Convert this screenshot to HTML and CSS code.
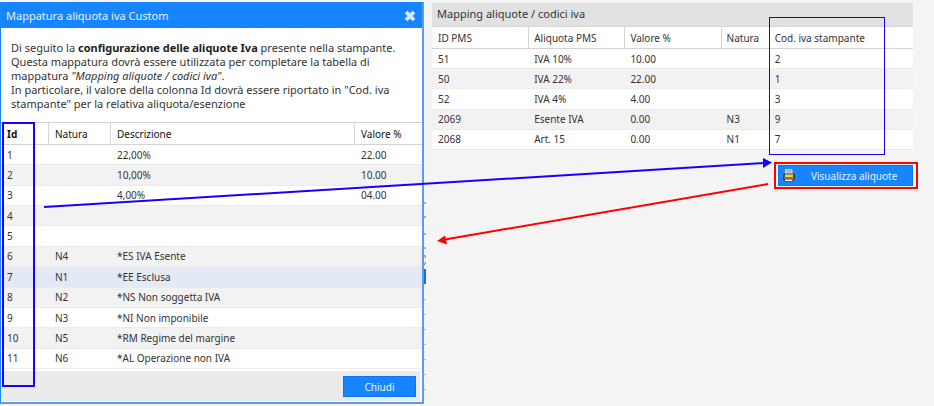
FILE: index.html
```html
<!DOCTYPE html>
<html lang="it">
<head>
    <meta charset="UTF-8">
    <meta name="viewport" content="width=device-width, initial-scale=1.0">
    <title>Mappatura aliquota iva</title>
    <link rel="stylesheet" href="styles.css">
</head>
<body>
    <div class="page">
        <section class="dialog">
            <header class="dialog-header">
                <h1>Mappatura aliquota iva Custom</h1>
                <button class="close-btn" aria-label="Chiudi finestra">
                    <svg width="12" height="12" viewBox="0 0 12 12"><path d="M2 2L10 10M10 2L2 10" stroke="#dcebff" stroke-width="3.6"/></svg>
                </button>
            </header>
            <div class="dialog-text">
                <p>Di seguito la <strong>configurazione delle aliquote Iva</strong> presente nella stampante.</p>
                <p>Questa mappatura dovrà essere utilizzata per completare la tabella di<br>mappatura <em>"Mapping aliquote / codici iva"</em>.</p>
                <p>In particolare, il valore della colonna Id dovrà essere riportato in "Cod. iva<br>stampante" per la relativa aliquota/esenzione</p>
            </div>
            <div class="table-wrap">
                <table class="codes">
                    <thead>
                        <tr><th class="col-id">Id</th><th class="col-natura">Natura</th><th>Descrizione</th><th class="col-valore">Valore %</th></tr>
                    </thead>
                    <tbody>
                        <tr><td>1</td><td></td><td>22,00%</td><td>22.00</td></tr>
                        <tr><td>2</td><td></td><td>10,00%</td><td>10.00</td></tr>
                        <tr><td>3</td><td></td><td>4,00%</td><td>04.00</td></tr>
                        <tr><td>4</td><td></td><td></td><td></td></tr>
                        <tr><td>5</td><td></td><td></td><td></td></tr>
                        <tr><td>6</td><td>N4</td><td>*ES IVA Esente</td><td></td></tr>
                        <tr class="selected"><td>7</td><td>N1</td><td>*EE Esclusa</td><td></td></tr>
                        <tr class="even"><td>8</td><td>N2</td><td>*NS Non soggetta IVA</td><td></td></tr>
                        <tr><td>9</td><td>N3</td><td>*NI Non imponibile</td><td></td></tr>
                        <tr><td>10</td><td>N5</td><td>*RM Regime del margine</td><td></td></tr>
                        <tr><td>11</td><td>N6</td><td>*AL Operazione non IVA</td><td></td></tr>
                    </tbody>
                </table>
                <div class="mark mark-id"></div>
            </div>
            <footer class="dialog-footer">
                <button class="btn btn-close">Chiudi</button>
            </footer>
        </section>

        <!-- edge of the window behind the dialog -->
        <svg class="behind" width="2" height="206" viewBox="0 0 2 206">
            <path d="M0 3H3M0 17H3M0 34H3M0 48H3M0 55L2 58M2 62L0 65" stroke="#666" fill="none"/>
            <rect y="69" width="3" height="15" fill="#0a78d6"/>
            <path d="M0 99.500H3M0 114.500H3M0 129.500H3M0 144.500H3M0 159.500H3M0 174.500H3M0 189.500H3" stroke="#bbb"/>
        </svg>

        <section class="panel">
            <div class="mapping-wrap">
                <h2>Mapping aliquote / codici iva</h2>
                <table class="mapping">
                    <thead>
                        <tr><th>ID PMS</th><th>Aliquota PMS</th><th>Valore %</th><th class="col-nat">Natura</th><th class="col-cod">Cod. iva stampante</th></tr>
                    </thead>
                    <tbody>
                        <tr><td>51</td><td>IVA 10%</td><td>10.00</td><td></td><td>2</td></tr>
                        <tr><td>50</td><td>IVA 22%</td><td>22.00</td><td></td><td>1</td></tr>
                        <tr><td>52</td><td>IVA 4%</td><td>4.00</td><td></td><td>3</td></tr>
                        <tr><td>2069</td><td>Esente IVA</td><td>0.00</td><td>N3</td><td>9</td></tr>
                        <tr><td>2068</td><td>Art. 15</td><td>0.00</td><td>N1</td><td>7</td></tr>
                    </tbody>
                </table>
                <div class="mark mark-cod"></div>
            </div>
            <div class="actions">
                <div class="highlight">
                    <button class="btn btn-view">
                        <svg width="12" height="13" viewBox="0 0 12 13">
                            <path d="M2 0H9L10 5H2Z" fill="#e9effc" stroke="#8794b0" stroke-width=".6"/>
                            <path d="M3.500 1.500H5.500M6.500 1.500H8M4 3H8.500" stroke="#6b7fb5"/>
                            <path d="M1 4.500H11L12 6V9.500L11 12.500H1L0 10V6Z" fill="#3d4250"/>
                            <path d="M2 5.500H10V8H2Z" fill="#dfe032"/>
                            <path d="M1 9H11" stroke="#a9a878"/>
                            <path d="M2 10.500H9V12H2Z" fill="#f3f0e8"/>
                            <path d="M9 10.500H10.500V12H9Z" fill="#e2573b"/>
                        </svg>
                        <span>Visualizza aliquote</span>
                    </button>
                </div>
            </div>
        </section>

        <svg class="arrows" width="934" height="406" viewBox="0 0 934 406">
            <path d="M44 207L764 163" stroke="#1800ff" stroke-width="2"/>
            <path d="M763 158L772 162.500L763 168Z" fill="#1800ff"/>
            <path d="M768 184L445 239.500" stroke="#f00" stroke-width="2"/>
            <path d="M437 241L445 235.500L447 244.500Z" fill="#f00"/>
        </svg>
    </div>
</body>
</html>
```

FILE: styles.css
```css
* {
    box-sizing: border-box;
}
body {
    margin: 0;
    background-color: #f4f4f4;
    color: #333;
    font-family: "Noto Sans", Tahoma, sans-serif;
    font-size: 11px;
    line-height: 14px;
}
h1, h2, p {
    margin: 0;
    font-size: 11px;
    font-weight: normal;
}
.page {
    position: relative;
    display: flex;
    align-items: flex-start;
    padding-top: 2px;
    overflow: hidden;
}
.dialog {
    flex: 0 0 424px;
    background-color: #fff;
    border: 1px solid #1785ff;
    border-right: 2px solid #5a9cf2;
    border-bottom: 2px solid #5a9cf2;
}
.dialog-header {
    display: flex;
    align-items: center;
    justify-content: space-between;
    height: 25px;
    padding: 0 6px 0 5px;
    background-color: #1785ff;
    color: #e6f1ff;
}
.close-btn {
    display: flex;
    padding: 0;
    border: none;
    background: none;
    cursor: pointer;
}
.dialog-text {
    padding: 13px 4px 11px 10px;
}
.dialog-text strong {
    color: #222;
}
.table-wrap, .mapping-wrap {
    position: relative;
}
table {
    width: 100%;
    border-collapse: separate;
    border-spacing: 0;
    table-layout: fixed;
    font-size: 10px;
}
th {
    padding: 0 6px;
    font-weight: normal;
    text-align: left;
    white-space: nowrap;
    background-color: #fff;
    border-bottom: 1px solid #d4d4d4;
}
th + th {
    border-left: 1px solid #d4d4d4;
}
td {
    height: 20px;
    padding: 0 7px;
    white-space: nowrap;
    background-color: #fff;
    border-bottom: 1px solid #ebebeb;
}
tr:nth-child(even) td, tr.even td {
    background-color: #f2f2f2;
}
tr.selected td {
    background-color: #e3eaf5;
}
.codes {
    height: 247px;
    border-top: 1px solid #d4d4d4;
}
.codes th {
    height: 22px;
    color: #111;
}
.codes td:first-child, .codes th:first-child {
    padding-left: 6px;
}
.codes .col-id {
    width: 47px;
    font-weight: bold;
}
.col-natura {
    width: 62px;
}
.col-valore {
    width: 68px;
}
.dialog-footer {
    display: flex;
    justify-content: flex-end;
    margin: 2px 2px 1px 0;
    padding: 5px 4px 4px;
    background-color: #ebebeb;
}
.btn {
    height: 21px;
    padding: 0;
    border: 1px solid #0f74ef;
    background-color: #1785ff;
    color: #e6f1ff;
    font: inherit;
    font-size: 10px;
    cursor: pointer;
}
.btn-close {
    width: 73px;
}
.behind {
    flex: none;
    margin-top: 198px;
}
.panel {
    flex: 1;
    margin: 1px 21px 0 6px;
}
.panel h2 {
    padding: 4px 5px 5px;
    background-color: #e1e1e1;
    border-bottom: 1px solid #d4d4d4;
}
.mapping {
    height: 123px;
}
.mapping th {
    height: 22px;
    width: 20%;
    padding-left: 5px;
}
.mapping .col-nat {
    width: 10%;
}
.mapping .col-cod {
    width: 30%;
}
.mapping td, .mapping th:first-child {
    padding-left: 6px;
}
.mark {
    position: absolute;
    border: 2px solid #1800ff;
}
.mark-id {
    top: 0;
    left: 1px;
    width: 33px;
    height: 265px;
}
.mark-cod {
    top: 14px;
    left: 70%;
    width: 116px;
    height: 138px;
    border-width: 1px;
}
.actions {
    display: flex;
    justify-content: flex-end;
    margin: 12px -5px 0 0;
}
.highlight {
    padding: 1px 3px 1px 2px;
    border: 2px solid #f00;
}
.btn-view {
    display: flex;
    align-items: center;
    gap: 16px;
    width: 135px;
    padding: 0 4px;
    white-space: nowrap;
}
.arrows {
    position: absolute;
    top: 0;
    left: 0;
    pointer-events: none;
}
```
